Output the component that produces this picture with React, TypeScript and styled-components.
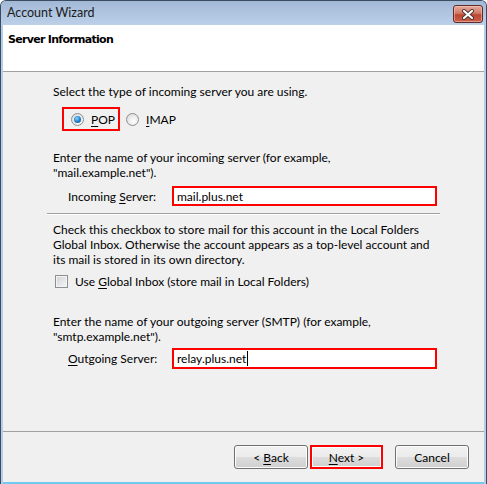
import React from 'react';
import styled, { createGlobalStyle } from 'styled-components';

const GlobalStyle = createGlobalStyle`
    html, body {
        margin: 0;
        padding: 0;
        background: #ffffff;
    }
    body {
        font-family: Lato, 'Noto Sans', sans-serif;
        font-size: 12px;
        color: #000;
    }
    * {
        box-sizing: border-box;
    }
`;

const Window = styled.div`
    width: 487px;
    height: 484px;
    display: flex;
    flex-direction: column;
    border: 1px solid #3b4b60;
    border-bottom: none;
    border-radius: 6px 6px 0 0;
    background: #b4cde8;
    overflow: hidden;
`;

const TitleBar = styled.div`
    height: 24px;
    flex: none;
    display: flex;
    align-items: flex-start;
    padding: 0 3px 0 6px;
    background: linear-gradient(#a2b9d6, #bcd0e9);
`;

const TitleText = styled.span`
    line-height: 24px;
    font-size: 12.5px;
    color: #1b1b1b;
`;

const CloseButton = styled.div`
    margin: 4px 0 0 auto;
    width: 30px;
    height: 18px;
    display: flex;
    align-items: center;
    justify-content: center;
    border: 1px solid #5e2a24;
    border-radius: 3px;
    background: linear-gradient(#e6aa9c, #d27a66 45%, #bd4630 55%, #c9614c);
    box-shadow: inset 0 0 0 1px rgba(255, 210, 200, 0.5);
`;

const Client = styled.div`
    height: 457px;
    flex: none;
    display: flex;
    flex-direction: column;
    margin: 0 2px;
    background: #f0f0f0;
    box-shadow: 0 3px 0 #6fcaee;
`;

const Header = styled.div`
    height: 47px;
    flex: none;
    padding: 8px 0 0 5px;
    background: #fff;
    border-bottom: 1px solid #a0a0a0;
`;

const HeaderTitle = styled.div`
    font-family: 'DejaVu Sans', sans-serif;
    font-weight: bold;
    font-size: 11px;
    letter-spacing: -0.7px;
    line-height: 14px;
`;

const Body = styled.div`
    flex: 1;
    padding: 12px 0 0 50px;
    display: flex;
    flex-direction: column;
`;

const Text = styled.div<{ $top: number }>`
    line-height: 15px;
    margin-top: ${(p) => p.$top}px;
    white-space: nowrap;
`;

const RadioRow = styled.div`
    display: flex;
    align-items: center;
    height: 24px;
    margin: 8px 0 0 9px;
`;

const Highlight = styled.div`
    display: flex;
    align-items: center;
    width: 58px;
    height: 24px;
    padding-left: 7px;
    border: 2px solid #ff0000;
`;

const Option = styled.label`
    display: flex;
    align-items: center;
    gap: 7px;
    margin-left: 6px;
    &:first-child {
        margin-left: 0;
    }
`;

const Radio = styled.span<{ $checked?: boolean }>`
    width: 13px;
    height: 13px;
    border-radius: 50%;
    border: 1px solid #8c8e91;
    background: radial-gradient(circle at 60% 65%, #ffffff 0%, #e8e8e8 55%, #cfd1d4 100%);
    display: flex;
    align-items: center;
    justify-content: center;
    &::after {
        content: '';
        display: ${(p) => (p.$checked ? 'block' : 'none')};
        width: 7px;
        height: 7px;
        border-radius: 50%;
        background: radial-gradient(circle at 40% 35%, #8fd3ff 0%, #2a8ad6 45%, #0b3f7a 100%);
    }
`;

const Key = styled.span`
    text-decoration: underline;
    text-underline-offset: 2px;
`;

const FieldRow = styled.div<{ $top: number; $h: number }>`
    display: flex;
    align-items: center;
    margin-top: ${(p) => p.$top}px;
    height: ${(p) => p.$h}px;
    padding-left: 15px;
`;

const FieldLabel = styled.span`
    width: 104px;
    flex: none;
`;

const FieldBox = styled.div`
    width: 265px;
    height: 100%;
    display: flex;
    align-items: center;
    padding-left: 3px;
    background: #fff;
    border: 2px solid #ff0000;
`;

const Caret = styled.span`
    display: inline-block;
    width: 1px;
    height: 15px;
    margin-left: 1px;
    background: #000;
`;

const Divider = styled.div<{ $top: number }>`
    margin: ${(p) => p.$top}px 0 0 -6px;
    width: 393px;
    height: 2px;
    border-top: 1px solid #a0a0a0;
    border-bottom: 1px solid #ffffff;
`;

const CheckRow = styled.label`
    display: flex;
    align-items: center;
    gap: 7px;
    height: 15px;
    margin: 7px 0 0 2px;
`;

const Checkbox = styled.span`
    width: 13px;
    height: 13px;
    border: 1px solid #8e8f8f;
    box-shadow: inset 0 0 0 1px #f4f4f4;
    background: linear-gradient(135deg, #cfd3d8, #f6f6f6);
`;

const Footer = styled.div`
    height: 51px;
    flex: none;
    border-top: 1px solid #a0a0a0;
    display: flex;
    align-items: flex-start;
    padding: 13px 15px 0 0;
    justify-content: flex-end;
`;

const Button = styled.button<{ $marked?: boolean; $gap?: number }>`
    width: ${(p) => (p.$marked ? 73 : 74)}px;
    height: 24px;
    margin-left: ${(p) => p.$gap ?? 0}px;
    font: inherit;
    color: #000;
    padding: 0;
    border: ${(p) => (p.$marked ? '2px solid #ff0000' : '1px solid #707070')};
    border-radius: ${(p) => (p.$marked ? 0 : 3)}px;
    background: linear-gradient(#f2f2f2 0%, #ebebeb 50%, #dddddd 51%, #cfcfcf 100%);
    box-shadow: inset 0 0 0 1px #fcfcfc;
`;

export default function App() {
    return (
        <>
            <GlobalStyle />
            <Window>
                <TitleBar>
                    <TitleText>Account Wizard</TitleText>
                    <CloseButton>
                        <svg width="14" height="11" viewBox="0 0 14 11">
                            <path d="M3 2 L11 9 M11 2 L3 9" stroke="#4a3330" strokeWidth="4" strokeLinecap="round" />
                            <path d="M3 2 L11 9 M11 2 L3 9" stroke="#ffffff" strokeWidth="2.2" strokeLinecap="round" />
                        </svg>
                    </CloseButton>
                </TitleBar>
                <Client>
                    <Header>
                        <HeaderTitle>Server Information</HeaderTitle>
                    </Header>
                    <Body>
                        <Text $top={0}>Select the type of incoming server you are using.</Text>
                        <RadioRow>
                            <Highlight>
                                <Option>
                                    <Radio $checked />
                                    <span><Key>P</Key>OP</span>
                                </Option>
                            </Highlight>
                            <Option>
                                <Radio />
                                <span><Key>I</Key>MAP</span>
                            </Option>
                        </RadioRow>
                        <Text $top={19}>
                            Enter the name of your incoming server (for example,
                            <br />
                            "mail.example.net").
                        </Text>
                        <FieldRow $top={6} $h={20}>
                            <FieldLabel>Incoming <Key>S</Key>erver:</FieldLabel>
                            <FieldBox>mail.plus.net</FieldBox>
                        </FieldRow>
                        <Divider $top={7} />
                        <Text $top={7}>
                            Check this checkbox to store mail for this account in the Local Folders
                            <br />
                            Global Inbox. Otherwise the account appears as a top-level account and
                            <br />
                            its mail is stored in its own directory.
                        </Text>
                        <CheckRow>
                            <Checkbox />
                            <span>Use <Key>G</Key>lobal Inbox (store mail in Local Folders)</span>
                        </CheckRow>
                        <Text $top={25}>
                            Enter the name of your outgoing server (SMTP) (for example,
                            <br />
                            "smtp.example.net").
                        </Text>
                        <FieldRow $top={4} $h={21}>
                            <FieldLabel><Key>O</Key>utgoing Server:</FieldLabel>
                            <FieldBox>
                                relay.plus.net
                                <Caret />
                            </FieldBox>
                        </FieldRow>
                    </Body>
                    <Footer>
                        <Button>&lt; <Key>B</Key>ack</Button>
                        <Button $marked $gap={2}><Key>N</Key>ext &gt;</Button>
                        <Button $gap={12}>Cancel</Button>
                    </Footer>
                </Client>
            </Window>
        </>
    );
}
